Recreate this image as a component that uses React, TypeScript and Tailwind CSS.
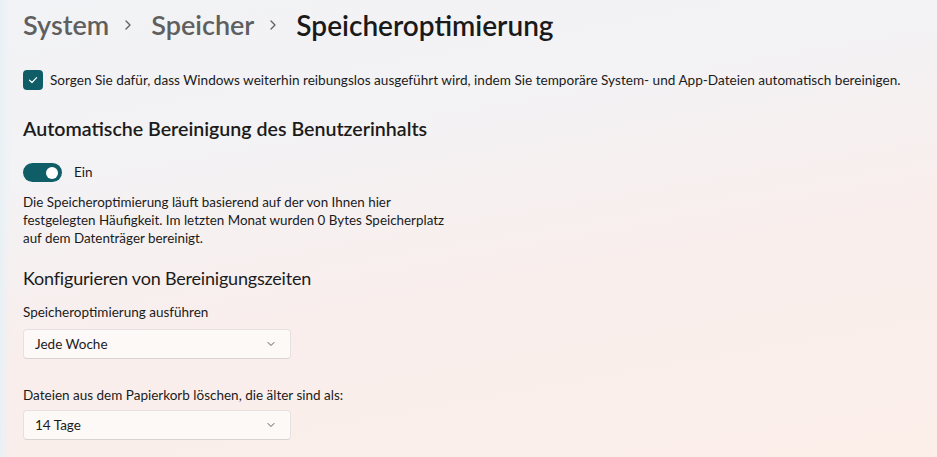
import React from 'react';

const font = { fontFamily: 'Lato, "Noto Sans", sans-serif' };

const Chevron = () => (
  <svg width="10" height="10" viewBox="0 0 10 10" className="text-[#5c5c5c]">
    <path d="M2 3.5 L5 6.5 L8 3.5" fill="none" stroke="currentColor" strokeWidth="1" strokeLinecap="round" strokeLinejoin="round" />
  </svg>
);

const Crumb = () => (
  <svg width="10" height="14" viewBox="0 0 10 14" className="ml-[14px] mr-[18px] text-[#5f5f5f]">
    <path d="M3 3 L7 7 L3 11" fill="none" stroke="currentColor" strokeWidth="1.3" strokeLinecap="round" strokeLinejoin="round" />
  </svg>
);

const Select = ({ value }: { value: string }) => (
  <div className="w-[268px] h-[30px] flex items-center justify-between pl-[11px] pr-[14px] rounded-[4px] bg-[#fefbfa]/80 border border-[#e6e1e0] border-b-[#d9d3d2] text-[13.5px] text-[#1b1b1b]">
    <span>{value}</span>
    <Chevron />
  </div>
);

export default function App() {
  return (
    <div
      className="w-[937px] h-[457px] overflow-hidden bg-[linear-gradient(90deg,#e8f1f6_0px,rgba(255,255,255,0)_10px),linear-gradient(170deg,#f2f3f6_0%,#f3f2f4_30%,#f9eeec_60%,#fcefea_100%)] text-[#1b1b1b]"
      style={font}
    >
      <div className="flex flex-col px-[23px]">
        {/* Breadcrumb */}
        <div className="flex items-center h-[36px] mt-[7px] text-[27px] font-semibold">
          <span className="text-[#5f5f5f]">System</span>
          <Crumb />
          <span className="text-[#5f5f5f]">Speicher</span>
          <Crumb />
          <span className="text-[#1a1a1a] text-[28px]">Speicheroptimierung</span>
        </div>

        {/* Checkbox */}
        <div className="flex items-center mt-[27px] gap-[7px]">
          <div className="w-[20px] h-[20px] shrink-0 rounded-[4px] bg-[#0e5d67] flex items-center justify-center">
            <svg width="12" height="12" viewBox="0 0 12 12">
              <path d="M2.5 6.2 L5 8.5 L9.6 3.6" fill="none" stroke="white" strokeWidth="1.2" strokeLinecap="round" strokeLinejoin="round" />
            </svg>
          </div>
          <span className="text-[13.6px] whitespace-nowrap">
            Sorgen Sie dafür, dass Windows weiterhin reibungslos ausgeführt wird, indem Sie temporäre System- und App-Dateien automatisch bereinigen.
          </span>
        </div>

        {/* Automatic cleanup */}
        <h2 className="mt-[25px] text-[19.6px] leading-[28px] font-semibold">
          Automatische Bereinigung des Benutzerinhalts
        </h2>

        <div className="flex items-center mt-[19px] gap-[12px]">
          <div className="w-[39px] h-[19px] rounded-full bg-[#0e5d67] flex items-center justify-end pr-[4px]">
            <div className="w-[12px] h-[12px] rounded-full bg-white" />
          </div>
          <span className="text-[13.5px]">Ein</span>
        </div>

        <p className="mt-[10px] text-[13.4px] leading-[18px]">
          Die Speicheroptimierung läuft basierend auf der von Ihnen hier
          <br />
          festgelegten Häufigkeit. Im letzten Monat wurden 0 Bytes Speicherplatz
          <br />
          auf dem Datenträger bereinigt.
        </p>

        {/* Schedule */}
        <h3 className="mt-[17px] text-[18px] leading-[28px] tracking-[-0.2px]">Konfigurieren von Bereinigungszeiten</h3>

        <label className="mt-[10px] text-[13.5px] leading-[20px]">Speicheroptimierung ausführen</label>
        <div className="mt-[7px]">
          <Select value="Jede Woche" />
        </div>

        <label className="mt-[26px] text-[13.5px] leading-[20px]">
          Dateien aus dem Papierkorb löschen, die älter sind als:
        </label>
        <div className="mt-[5px]">
          <Select value="14 Tage" />
        </div>
      </div>
    </div>
  );
}
